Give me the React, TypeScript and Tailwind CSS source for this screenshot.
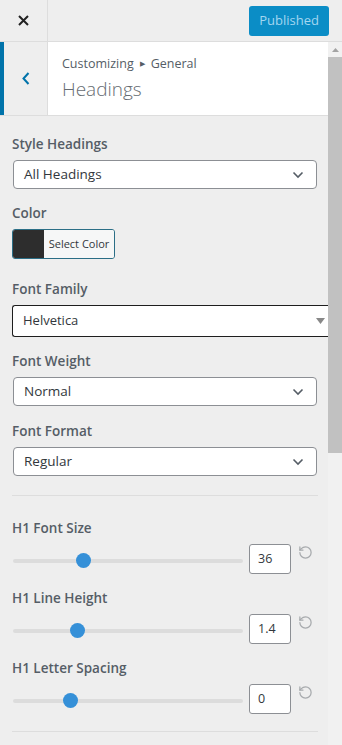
import React from 'react';
import { RotateCcw } from 'lucide-react';

const font = { fontFamily: '"Open Sans", "Noto Sans", sans-serif' };

const Chevron = () => (
  <svg width="12" height="8" viewBox="0 0 12 8" className="shrink-0">
    <path d="M1.5 1.5 L6 6 L10.5 1.5" fill="none" stroke="#555d66" strokeWidth="1.6" />
  </svg>
);

const SelectBox: React.FC<{ value: string }> = ({ value }) => (
  <div className="h-[29px] w-[304px] ml-[1px] bg-white border border-[#8c8f94] rounded-[4px] flex items-center justify-between pl-[10px] pr-[12px]">
    <span className="text-[13.5px] text-[#32373c]">{value}</span>
    <Chevron />
  </div>
);

const Label: React.FC<{ text: string }> = ({ text }) => (
  <div className="text-[13.5px] font-semibold text-[#555d66] leading-[20px]">{text}</div>
);

const SliderRow: React.FC<{ label: string; value: string; pos: number }> = ({ label, value, pos }) => (
  <div className="flex flex-col">
    <Label text={label} />
    <div className="flex items-center mt-[6px]">
      <div className="relative w-[230px] h-[4px] bg-[#dcdcdc] rounded-full ml-[1px] mt-[3px]">
        <div
          className="absolute top-1/2 w-[15px] h-[15px] -mt-[7.5px] -ml-[7.5px] rounded-full bg-[#3590d8]"
          style={{ left: pos }}
        />
      </div>
      <div className="ml-[6px] w-[42px] h-[30px] bg-white border border-[#8c8f94] rounded-[3px] flex items-center pl-[8px] text-[12.5px] text-[#32373c]">
        {value}
      </div>
      <div className="ml-[7px] -mt-[14px] text-[#a7aaad]">
        <RotateCcw size={15} strokeWidth={2} />
      </div>
    </div>
  </div>
);

export default function App() {
  return (
    <div className="w-[342px] h-[745px] overflow-hidden bg-[#eeeeee] flex flex-col" style={font}>
      {/* top bar */}
      <div className="h-[42px] flex border-b border-[#dddddd] shrink-0">
        <div className="w-[48px] border-r border-[#dddddd] flex items-center justify-center">
          <svg width="11" height="11" viewBox="0 0 11 11">
            <path d="M1 1 L10 10 M10 1 L1 10" stroke="#222" strokeWidth="2" />
          </svg>
        </div>
        <div className="flex-1 flex items-center justify-end pr-[13px]">
          <div className="h-[30px] px-[10px] rounded-[3px] bg-[#0b8dc6] text-[#a3d6f0] text-[13px] flex items-center">
            Published
          </div>
        </div>
      </div>

      <div className="flex flex-1 min-h-0">
        <div className="flex-1 flex flex-col">
          {/* section header */}
          <div className="h-[74px] flex border-b border-[#dddddd] shrink-0">
            <div className="w-[48px] border-l-[4px] border-[#0073aa] border-r border-r-[#dddddd] flex items-center justify-center">
              <svg width="8" height="13" viewBox="0 0 8 13">
                <path d="M6.5 1 L1.5 6.5 L6.5 12" fill="none" stroke="#0073aa" strokeWidth="2" />
              </svg>
            </div>
            <div className="flex-1 bg-white pl-[14px] pt-[13px]">
              <div className="text-[12.5px] text-[#555d66] leading-[18px] flex items-center">
                Customizing
                <span className="mx-[6px] text-[7px]">▶</span>
                General
              </div>
              <div className="text-[19px] text-[#666c72] font-light leading-[26px] mt-[3px]">Headings</div>
            </div>
          </div>

          {/* controls */}
          <div className="pl-[12px] pt-[18px] flex flex-col">
            <Label text="Style Headings" />
            <div className="mt-[6px]">
              <SelectBox value="All Headings" />
            </div>

            <div className="mt-[14px]">
              <Label text="Color" />
            </div>
            <div className="mt-[6px] w-[103px] h-[30px] rounded-[3px] border border-[#2b6e86] flex overflow-hidden">
              <div className="w-[31px] bg-[#2d2d2d]" />
              <div className="flex-1 bg-[#f6f7f7] flex items-center justify-center text-[11px] text-[#32373c]">
                Select Color
              </div>
            </div>

            <div className="mt-[20px]">
              <Label text="Font Family" />
            </div>
            <div className="mt-[6px] h-[32px] bg-white border border-[#1e1e1e] border-r-0 rounded-l-[3px] flex items-center justify-between pl-[10px] pr-[3px]">
              <span className="text-[13px] text-[#32373c]">Helvetica</span>
              <svg width="9" height="6" viewBox="0 0 9 6">
                <path d="M0 0 L9 0 L4.5 6 Z" fill="#888" />
              </svg>
            </div>

            <div className="mt-[14px]">
              <Label text="Font Weight" />
            </div>
            <div className="mt-[6px]">
              <SelectBox value="Normal" />
            </div>

            <div className="mt-[15px]">
              <Label text="Font Format" />
            </div>
            <div className="mt-[6px]">
              <SelectBox value="Regular" />
            </div>

            <div className="mt-[19px] w-[306px] border-t border-[#dddddd]" />

            <div className="mt-[22px] flex flex-col gap-[14px]">
              <SliderRow label="H1 Font Size" value="36" pos={70} />
              <SliderRow label="H1 Line Height" value="1.4" pos={64} />
              <SliderRow label="H1 Letter Spacing" value="0" pos={57} />
            </div>

            <div className="mt-[17px] w-[306px] border-t border-[#dddddd]" />
          </div>
        </div>

        {/* scrollbar */}
        <div className="w-[14px] bg-[#f1f1f1] flex flex-col items-center shrink-0">
          <div className="h-[15px] flex items-center justify-center">
            <svg width="7" height="4" viewBox="0 0 7 4">
              <path d="M0 4 L3.5 0 L7 4 Z" fill="#a3a3a3" />
            </svg>
          </div>
          <div className="w-[14px] h-[396px] bg-[#c1c1c1]" />
        </div>
      </div>
    </div>
  );
}
